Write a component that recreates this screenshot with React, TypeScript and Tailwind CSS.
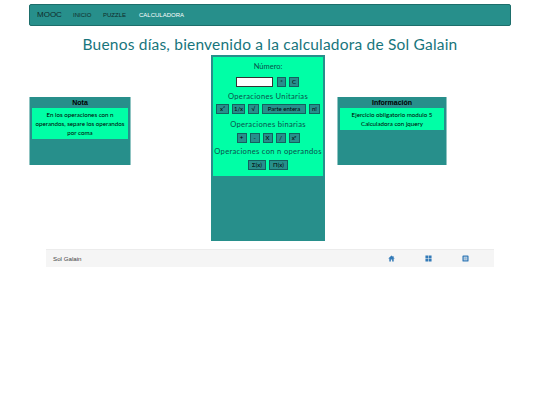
const HAND = 'font-["Lato",sans-serif]';

function Btn({ label, w }: { label: string; w: string }) {
  return (
    <button type="button" className={`${w} h-[10px] bg-[#278f8b] border border-[#14605e] text-[6px] leading-none text-black ${HAND}`}>
      {label}
    </button>
  );
}

function SidePanel({ title, lines, className }: { title: string; lines: string[]; className: string }) {
  return (
    <div className={`${className} h-[68px] bg-[#278f8b] border-x border-[#8fc4c2] flex flex-col`}>
      <div className='h-[11px] shrink-0 text-center text-[7px] leading-[11px] font-bold text-black font-["Liberation_Sans",sans-serif]'>{title}</div>
      <div className={`mx-[2px] bg-[#00ffa6] py-[2px] text-center text-[6.2px] leading-[9px] text-black ${HAND}`}>
        {lines.map(l => <div key={l}>{l}</div>)}
      </div>
    </div>
  );
}

function OpTitle({ text }: { text: string }) {
  return <div className={`whitespace-nowrap text-center text-[7.6px] leading-[11px] tracking-[0.3px] text-[#0a4f4b] ${HAND}`}>{text}</div>;
}

export default function App() {
  return (
    <div className="w-[540px] h-[405px] bg-white overflow-hidden pt-[4px]">
      <nav className='ml-[29px] w-[482px] h-[22px] bg-[#278f8b] border border-[#1d6e6b] rounded-[2px] flex items-center pl-[7px] font-["Liberation_Sans",sans-serif]'>
        <span className="text-[8px] text-[#0f2b2a] w-[36px]">MOOC</span>
        <span className="text-[6px] text-[#0f2b2a] w-[30px]">INICIO</span>
        <span className="text-[6px] text-[#0f2b2a] w-[36px]">PUZZLE</span>
        <span className="text-[6px] text-white">CALCULADORA</span>
      </nav>

      <h1 className={`mt-[8px] h-[21px] whitespace-nowrap text-center text-[15.5px] leading-[21px] font-normal tracking-[0.2px] text-[#17757c] ${HAND}`}>
        Buenos días, bienvenido a la calculadora de Sol Galain
      </h1>

      <div className="flex items-start">
        <SidePanel
          className="ml-[29px] mt-[42px] w-[102px]"
          title="Nota"
          lines={['En los operaciones con n', 'operandos, separe los operandos', 'por coma']}
        />

        <div className="ml-[80px] w-[114px] h-[186px] bg-[#278f8b] border-t-[2px] border-[#278f8b] px-[2px]">
          <div className="h-[119px] bg-[#00ffa6] pt-[5px]">
            <div className={`text-center text-[7.5px] leading-[10px] text-[#0a4f4b] ${HAND}`}>Número:</div>
            <div className="mt-[5px] flex justify-center items-center gap-[3px] pr-[1px]">
              <input className="w-[37px] h-[10px] mr-[1px] bg-white border border-[#333]" />
              <Btn label="*" w="w-[9px]" />
              <Btn label="C" w="w-[10px]" />
            </div>
            <div className="mt-[4px]"><OpTitle text="Operaciones Unitarias" /></div>
            <div className="mt-[2px] flex justify-center gap-[3px]">
              <Btn label="x²" w="w-[13px]" />
              <Btn label="1/x" w="w-[13px]" />
              <Btn label="√" w="w-[11px]" />
              <Btn label="Parte entera" w="w-[44px]" />
              <Btn label="n!" w="w-[11px]" />
            </div>
            <div className="mt-[5px]"><OpTitle text="Operaciones binarias" /></div>
            <div className="mt-[3px] flex justify-center gap-[3px]">
              <Btn label="+" w="w-[10px]" />
              <Btn label="-" w="w-[10px]" />
              <Btn label="X" w="w-[10px]" />
              <Btn label="/" w="w-[10px]" />
              <Btn label="xʸ" w="w-[11px]" />
            </div>
            <div className="mt-[3px]"><OpTitle text="Operaciones con n operandos" /></div>
            <div className="mt-[3px] flex justify-center gap-[3px]">
              <Btn label="Σ(x)" w="w-[18px]" />
              <Btn label="Π(x)" w="w-[19px]" />
            </div>
          </div>
        </div>

        <SidePanel
          className="ml-[12px] mt-[42px] w-[110px]"
          title="Información"
          lines={['Ejercicio obligatorio modulo 5', 'Calculadora con jquery']}
        />
      </div>

      <footer className='ml-[46px] mt-[8px] w-[448px] h-[18px] bg-[#f5f5f5] border-t border-[#ececec] flex items-center pl-[7px] text-[6.2px] text-[#444] font-["Liberation_Sans",sans-serif]'>
        <span className="w-[335px]">Sol Galain</span>
        <svg viewBox="0 0 16 16" className="w-[7px] h-[7px] fill-[#337ab7]">
          <path d="M8 1 0.5 8H3v7h3.5v-4.5h3V15H13V8h2.5L12.5 5.2V2H11v1.8z" />
        </svg>
        <svg viewBox="0 0 16 16" className="ml-[30px] w-[7px] h-[7px] fill-[#337ab7]">
          <path d="M1 1h6.4v6.4H1zM8.6 1H15v6.4H8.6zM1 8.6h6.4V15H1zM8.6 8.6H15V15H8.6z" />
        </svg>
        <svg viewBox="0 0 16 16" className="ml-[30px] w-[7px] h-[7px] fill-[#337ab7]">
          <path fillRule="evenodd" d="M3 1h10a2 2 0 0 1 2 2v10a2 2 0 0 1-2 2H3a2 2 0 0 1-2-2V3a2 2 0 0 1 2-2zm1 3v8h8V4z" />
          <path d="M5 5h6v6H5z" opacity="0.5" />
        </svg>
      </footer>
    </div>
  );
}
